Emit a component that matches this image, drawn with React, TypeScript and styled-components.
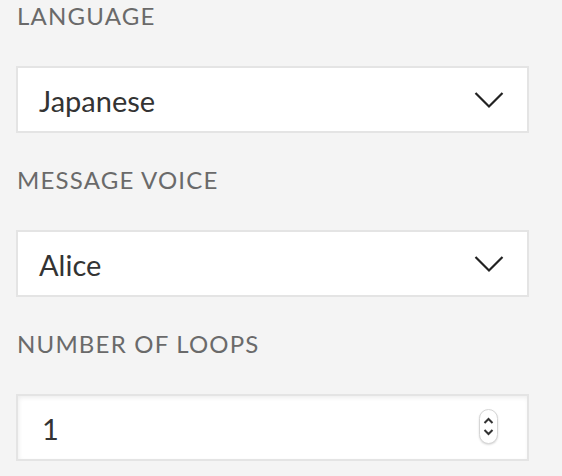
import * as React from 'react';
import styled, {createGlobalStyle} from 'styled-components';

const GlobalStyle = createGlobalStyle`
	html, body {
		margin: 0;
		padding: 0;
		background: #f4f4f4;
	}
	body {
		font-family: Lato, "Open Sans", sans-serif;
	}
`

const Panel = styled.div`
	width: 562px;
	height: 476px;
	padding-left: 16px;
	box-sizing: border-box;
	display: flex;
	flex-direction: column;
	overflow: hidden;
`

const Field = styled.div`
	display: flex;
	flex-direction: column;
	width: 513px;
	margin-bottom: 31px;
`

const Label = styled.div`
	font-size: 24px;
	line-height: 32px;
	letter-spacing: 1.2px;
	color: #6a6a6a;
	margin-bottom: 34px;
	padding-left: 1px;
`

const Control = styled.div<{ $inset?: boolean }>`
	height: 67px;
	box-sizing: border-box;
	border: 2px solid #e4e4e4;
	background: #fff;
	box-shadow: ${p => p.$inset ? 'inset 1px 2px 4px rgba(0,0,0,0.07)' : 'none'};
	display: flex;
	align-items: center;
	padding: 0 23px 0 21px;
`

const Value = styled.span<{ $pad?: number }>`
	flex: 1;
	font-size: 29px;
	color: #333;
	padding-left: ${p => p.$pad || 0}px;
	padding-top: 1px;
`

const Spinner = styled.div`
	width: 19px;
	height: 35px;
	box-sizing: border-box;
	border: 1px solid #d6d6d6;
	border-radius: 10px;
	background: #fff;
	box-shadow: 0 1px 2px rgba(0,0,0,0.15);
	display: flex;
	align-items: center;
	justify-content: center;
	margin-right: 6px;
	margin-top: -3px;
`

const Chevron = () => (
	<svg width="30" height="18" viewBox="0 0 30 18">
		<path d="M1.5 2 L15 15.5 L28.5 2" fill="none" stroke="#222" strokeWidth="2.2"/>
	</svg>
);

const SpinArrows = () => (
	<svg width="13" height="25" viewBox="0 0 13 25">
		<path d="M2.5 9 L6.5 5 L10.5 9" fill="none" stroke="#333" strokeWidth="2"/>
		<path d="M2.5 16 L6.5 20 L10.5 16" fill="none" stroke="#333" strokeWidth="2"/>
	</svg>
);

export default function App() {
	return <>
		<GlobalStyle/>
		<Panel>
			<Field>
				<Label>LANGUAGE</Label>
				<Control>
					<Value>Japanese</Value>
					<Chevron/>
				</Control>
			</Field>
			<Field>
				<Label>MESSAGE VOICE</Label>
				<Control>
					<Value>Alice</Value>
					<Chevron/>
				</Control>
			</Field>
			<Field>
				<Label>NUMBER OF LOOPS</Label>
				<Control $inset>
					<Value $pad={3}>1</Value>
					<Spinner><SpinArrows/></Spinner>
				</Control>
			</Field>
		</Panel>
	</>;
}
